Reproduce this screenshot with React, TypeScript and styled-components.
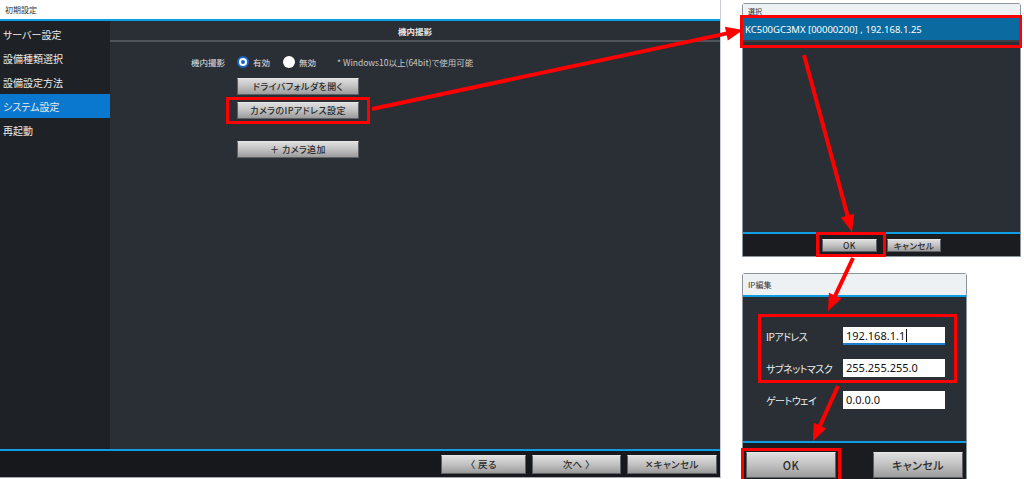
import React from "react";
import styled, { createGlobalStyle } from "styled-components";

const Global = createGlobalStyle`
  html, body { margin: 0; padding: 0; background: #ffffff; }
  body {
    width: 1024px; height: 479px; overflow: hidden;
    font-family: "Noto Sans CJK JP", "Noto Sans", sans-serif;
    font-feature-settings: "palt";
  }
  * { box-sizing: border-box; }
`;

const Stage = styled.div`
  position: relative;
  display: flex;
  width: 1024px;
  height: 479px;
  background: #ffffff;
`;

/* ---------- main window ---------- */
const MainWindow = styled.div`
  width: 721px;
  height: 478px;
  display: flex;
  flex-direction: column;
  border-right: 1px solid #c9cdd2;
  border-bottom: 1px solid #a4a9ae;
  background: #2a2e35;
`;

const TitleBar = styled.div<{ $h: number; $fs: number; $bg: string }>`
  height: ${(p) => p.$h}px;
  background: ${(p) => p.$bg};
  color: #333;
  font-size: ${(p) => p.$fs}px;
  display: flex;
  align-items: center;
  padding-left: 5px;
  flex: none;
`;

const BlueBar = styled.div`
  height: 2px;
  background: #0e9ee3;
  flex: none;
`;

const Body = styled.div`
  flex: 1;
  display: flex;
  min-height: 0;
`;

const Sidebar = styled.nav`
  width: 110px;
  background: #1e2126;
  padding-top: 1px;
  display: flex;
  flex-direction: column;
`;

const SideItem = styled.div<{ $active?: boolean }>`
  height: 24px;
  padding-left: 3px;
  display: flex;
  align-items: center;
  font-size: 10px;
  color: #ececec;
  background: ${(p) => (p.$active ? "#0b78d0" : "transparent")};
`;

const Content = styled.section`
  flex: 1;
  display: flex;
  flex-direction: column;
  background: #2a2e35;
`;

const SectionHeader = styled.div`
  height: 21px;
  border-bottom: 2px solid #50555c;
  display: flex;
  align-items: center;
  justify-content: center;
  font-size: 8.5px;
  font-weight: 700;
  color: #e6e6e6;
`;

const Form = styled.div`
  padding: 13px 0 0 81px;
  display: flex;
  flex-direction: column;
`;

const Row = styled.div`
  height: 14px;
  display: flex;
  align-items: center;
  font-size: 8.5px;
  color: #e2e2e2;
  white-space: nowrap;
`;

const RowLabel = styled.span`
  margin-right: 12px;
`;

const Radio = styled.span<{ $checked?: boolean }>`
  width: 12px;
  height: 12px;
  border-radius: 50%;
  margin-right: 4px;
  flex: none;
  background: #ffffff;
  border: ${(p) => (p.$checked ? "2px solid #1a64c8" : "none")};
  display: flex;
  align-items: center;
  justify-content: center;
  &::before {
    content: "";
    width: 4px;
    height: 4px;
    border-radius: 50%;
    background: ${(p) => (p.$checked ? "#1a64c8" : "transparent")};
  }
`;

const RadioText = styled.span<{ $gap: number }>`
  margin-right: ${(p) => p.$gap}px;
`;

const Note = styled.span`
  color: #c9c9c9;
`;

const ButtonStack = styled.div`
  margin: 9px 0 0 46px;
  display: flex;
  flex-direction: column;
  align-items: flex-start;
  gap: 7px;
`;

const Spacer = styled.div<{ $h: number }>`
  height: ${(p) => p.$h}px;
  flex: none;
`;

const GrayButton = styled.button<{ $w: number; $h: number; $fs: number }>`
  width: ${(p) => p.$w}px;
  height: ${(p) => p.$h}px;
  flex: none;
  padding: 0;
  margin: 0;
  border: 1px solid #5d6065;
  border-top-color: #e6e6e6;
  background: linear-gradient(#dedede 0%, #c4c4c4 45%, #9c9c9c 100%);
  color: #2b2b2b;
  font-family: "Noto Sans CJK JP", "Noto Sans", sans-serif;
  font-feature-settings: "palt";
  font-size: ${(p) => p.$fs}px;
  font-weight: 500;
  display: flex;
  align-items: center;
  justify-content: center;
  letter-spacing: 0.4px;
`;

const Footer = styled.div`
  height: 26px;
  background: #17181c;
  display: flex;
  align-items: center;
  justify-content: flex-end;
  gap: 6px;
  padding-right: 3px;
  flex: none;
`;

/* ---------- right side ---------- */
const RightPanel = styled.div`
  flex: 1;
  padding: 3px 0 0 21px;
  display: flex;
  flex-direction: column;
  align-items: flex-start;
  gap: 16px;
`;

const Dialog = styled.div<{ $w: number; $h: number }>`
  width: ${(p) => p.$w}px;
  height: ${(p) => p.$h}px;
  border: 1px solid #8e949b;
  border-radius: 3px 3px 0 0;
  display: flex;
  flex-direction: column;
  background: #2a2e35;
  flex: none;
`;

const SelectedRow = styled.div`
  height: 25px;
  background: #0b6aa0;
  border-top: 1px solid #4b94c4;
  border-bottom: 2px solid #3b3f46;
  color: #ffffff;
  font-family: "Noto Sans", sans-serif;
  font-size: 9.5px;
  display: flex;
  align-items: center;
  padding-left: 2px;
  white-space: nowrap;
`;

const DialogBody = styled.div`
  flex: 1;
  background: #2a2e35;
`;

const DialogFooter = styled.div<{ $h: number; $justify: string; $pad: string }>`
  height: ${(p) => p.$h}px;
  background: #1b1c20;
  display: flex;
  align-items: center;
  justify-content: ${(p) => p.$justify};
  gap: 10px;
  padding: ${(p) => p.$pad};
  flex: none;
`;

const IpBody = styled.div`
  height: 144px;
  padding: 30px 0 0 23px;
  display: flex;
  flex-direction: column;
  align-items: flex-start;
  flex: none;
`;

const FieldGroup = styled.div`
  display: flex;
  flex-direction: column;
  gap: 14px;
`;

const Field = styled.div`
  display: flex;
  align-items: center;
  height: 18px;
`;

const FieldLabel = styled.span`
  width: 77px;
  flex: none;
  font-size: 10px;
  letter-spacing: -0.5px;
  color: #eeeeee;
  white-space: nowrap;
`;

const FieldInput = styled.div<{ $focus?: boolean }>`
  width: 102px;
  height: 18px;
  flex: none;
  background: #ffffff;
  border-bottom: 2px solid ${(p) => (p.$focus ? "#1d7fd2" : "#ffffff")};
  color: #111;
  font-family: "Noto Sans", sans-serif;
  font-size: 11px;
  display: flex;
  align-items: center;
  padding-left: 3px;
`;

const Caret = styled.span`
  display: inline-block;
  width: 1px;
  height: 13px;
  background: #111;
  margin-left: 1px;
`;

const Highlight = styled.div<{ $t: number; $r: number; $b: number; $l: number }>`
  position: relative;
  flex: none;
  &::after {
    content: "";
    position: absolute;
    top: ${(p) => p.$t}px;
    right: ${(p) => p.$r}px;
    bottom: ${(p) => p.$b}px;
    left: ${(p) => p.$l}px;
    border: 3px solid #ff0000;
    pointer-events: none;
    z-index: 2;
  }
`;

const ArrowLayer = styled.svg`
  position: absolute;
  left: 0;
  top: 0;
  pointer-events: none;
  z-index: 3;
`;

type Arrow = { x1: number; y1: number; x2: number; y2: number };
const arrows: Arrow[] = [
  { x1: 372, y1: 109, x2: 743, y2: 30 },
  { x1: 804, y1: 55, x2: 852, y2: 232 },
  { x1: 853, y1: 258, x2: 828, y2: 311 },
  { x1: 838, y1: 386, x2: 813, y2: 441 },
];

function ArrowShape({ a }: { a: Arrow }) {
  const dx = a.x2 - a.x1;
  const dy = a.y2 - a.y1;
  const len = Math.hypot(dx, dy);
  const ux = dx / len;
  const uy = dy / len;
  const hl = 17;
  const hw = 7;
  const bx = a.x2 - ux * hl;
  const by = a.y2 - uy * hl;
  const nx = -uy;
  const ny = ux;
  const pts = `${a.x2},${a.y2} ${bx + nx * hw},${by + ny * hw} ${bx - nx * hw},${by - ny * hw}`;
  return (
    <g>
      <line x1={a.x1} y1={a.y1} x2={bx + ux * 2} y2={by + uy * 2} stroke="#ff0000" strokeWidth={4} />
      <polygon points={pts} fill="#ff0000" />
    </g>
  );
}

export default function App() {
  return (
    <>
      <Global />
      <Stage>
        <MainWindow>
          <TitleBar $h={19} $fs={8} $bg="#ffffff">初期設定</TitleBar>
          <BlueBar />
          <Body>
            <Sidebar>
              <SideItem>サーバー設定</SideItem>
              <SideItem>設備種類選択</SideItem>
              <SideItem>設備設定方法</SideItem>
              <SideItem $active>システム設定</SideItem>
              <SideItem>再起動</SideItem>
            </Sidebar>
            <Content>
              <SectionHeader>機内撮影</SectionHeader>
              <Form>
                <Row>
                  <RowLabel>機内撮影</RowLabel>
                  <Radio $checked />
                  <RadioText $gap={13}>有効</RadioText>
                  <Radio />
                  <RadioText $gap={21}>無効</RadioText>
                  <Note>* Windows10以上(64bit)で使用可能</Note>
                </Row>
                <ButtonStack>
                  <GrayButton $w={122} $h={17} $fs={9}>ドライバフォルダを開く</GrayButton>
                  <Highlight $t={-5} $r={-11} $b={-5} $l={-11}>
                    <GrayButton $w={122} $h={17} $fs={9}>カメラのIPアドレス設定</GrayButton>
                  </Highlight>
                  <Spacer $h={8} />
                  <GrayButton $w={122} $h={17} $fs={9}>＋ カメラ追加</GrayButton>
                </ButtonStack>
              </Form>
            </Content>
          </Body>
          <BlueBar />
          <Footer>
            <GrayButton $w={85} $h={19} $fs={9.5}>〈 戻る</GrayButton>
            <GrayButton $w={89} $h={19} $fs={9.5}>次へ 〉</GrayButton>
            <GrayButton $w={90} $h={19} $fs={9.5}>✕キャンセル</GrayButton>
          </Footer>
        </MainWindow>

        <RightPanel>
          <Dialog $w={279} $h={254}>
            <TitleBar $h={13} $fs={7} $bg="#eef1f4">選択</TitleBar>
            <Highlight $t={-2} $r={-2} $b={-6} $l={-3}>
              <SelectedRow>KC500GC3MX [00000200] , 192.168.1.25</SelectedRow>
            </Highlight>
            <DialogBody />
            <BlueBar />
            <DialogFooter $h={22} $justify="center" $pad="0">
              <Highlight $t={-7} $r={-9} $b={-5} $l={-6}>
                <GrayButton $w={55} $h={13} $fs={8.5}>OK</GrayButton>
              </Highlight>
              <GrayButton $w={54} $h={13} $fs={8.5}>キャンセル</GrayButton>
            </DialogFooter>
          </Dialog>

          <Dialog $w={225} $h={210}>
            <TitleBar $h={21} $fs={8} $bg="#eef1f4">IP編集</TitleBar>
            <BlueBar />
            <IpBody>
              <Highlight $t={-13} $r={-12} $b={-6} $l={-8}>
                <FieldGroup>
                  <Field>
                    <FieldLabel>IPアドレス</FieldLabel>
                    <FieldInput $focus>192.168.1.1<Caret /></FieldInput>
                  </Field>
                  <Field>
                    <FieldLabel>サブネットマスク</FieldLabel>
                    <FieldInput>255.255.255.0</FieldInput>
                  </Field>
                </FieldGroup>
              </Highlight>
              <Spacer $h={14} />
              <Field>
                <FieldLabel>ゲートウェイ</FieldLabel>
                <FieldInput>0.0.0.0</FieldInput>
              </Field>
            </IpBody>
            <BlueBar />
            <DialogFooter $h={40} $justify="space-between" $pad="4px 3px 0 3px">
              <Highlight $t={-4} $r={-5} $b={-8} $l={-5}>
                <GrayButton $w={90} $h={26} $fs={11}>OK</GrayButton>
              </Highlight>
              <GrayButton $w={90} $h={26} $fs={11}>キャンセル</GrayButton>
            </DialogFooter>
          </Dialog>
        </RightPanel>

        <ArrowLayer width={1024} height={479} viewBox="0 0 1024 479">
          {arrows.map((a, i) => (
            <ArrowShape key={i} a={a} />
          ))}
        </ArrowLayer>
      </Stage>
    </>
  );
}
